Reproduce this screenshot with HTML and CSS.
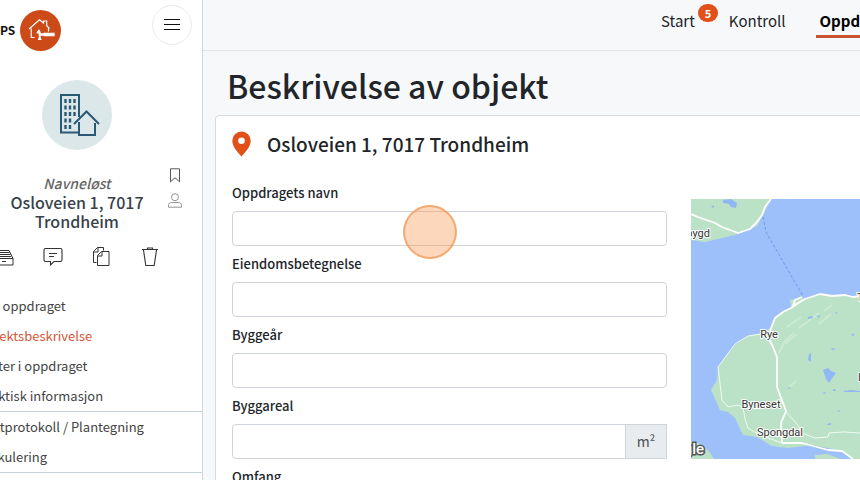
FILE: index.html
```html
<!DOCTYPE html>
<html lang="no">
<head>
    <meta charset="UTF-8">
    <meta name="viewport" content="width=device-width, initial-scale=1.0">
    <title>Beskrivelse av objekt</title>
    <link rel="stylesheet" href="styles.css">
</head>
<body>
    <aside class="sidebar">
        <div class="brand">
            <span class="brand-name">PS</span>
            <svg class="brand-logo" viewBox="0 0 41 41" aria-hidden="true">
                <circle cx="20.5" cy="20.5" r="20.5" fill="#cb4a18"/>
                <path d="M14.5 27.5h-3.300V18.500M9 19l10.500-9.300 4 3.300V11h3.200v4.800l2.800 2.700M28.500 18v3.500" fill="none" stroke="#fff" stroke-width="1.200"/>
                <path d="M18.500 19.500c1.300 0 2.200 2.200 2.200 3.800h3v-.5h11v3.500h-11v-.5h-3v2l1 2.300h-4l1-2.300v-4.300h-2.200c0-1.500 1-2.500 2-4z" fill="#fff"/>
            </svg>
            <button class="menu-button" aria-label="Meny">
                <svg width="16" height="12" viewBox="0 0 16 12"><path d="M0 .5h16M0 5.500h16M0 10.500h16" stroke="#111" stroke-width="1"/></svg>
            </button>
        </div>

        <div class="profile">
            <div class="avatar">
                <svg width="46" height="44" viewBox="-6 0 46 44" fill="none" stroke="#285b73" stroke-width="2">
                    <path d="M19 39.500H1V2h18v22"/>
                    <path d="M5.500 6v4M10 6v4M14.500 6v4M5.500 12.500v4M10 12.500v4M14.500 12.500v4M5.500 19v4M10 19v4M14.500 19v4M5.500 25.500v4M10 25.500v4M5.500 32v4M10 32v4" stroke-width="2.400"/>
                    <path d="M14 31l12.500-12.500L39 31M19 29v13h16V30"/>
                </svg>
            </div>
            <div class="project-name">Navneløst</div>
            <div class="project-address">Osloveien 1, 7017 Trondheim</div>
            <div class="side-actions">
                <button class="icon-button" aria-label="Bokmerke">
                    <svg width="14" height="15" viewBox="0 0 14 15"><path d="M2.500.8h9v13L7 9.700l-4.500 4.100z" fill="none" stroke="#444" stroke-width=".9"/></svg>
                </button>
                <button class="icon-button" aria-label="Bruker">
                    <svg width="14" height="15" viewBox="0 0 14 15" fill="none" stroke="#777" stroke-width=".8"><circle cx="7" cy="4.200" r="3.500"/><path d="M3.500 9.500h7c2 0 3 1.300 3 3v1.700H.5v-1.700c0-1.700 1-3 3-3z"/></svg>
                </button>
            </div>
        </div>

        <div class="toolbar">
            <button class="icon-button" aria-label="Arkiv">
                <svg width="20" height="20" viewBox="0 0 20 20" fill="none" stroke="#333"><path d="M1 11.500L4 3.500h11l4 8v6.500H1zM1 11.500h18M4 5.500h11.500M3.500 7.500h13M3 9.500h14M8 14.500h4"/></svg>
            </button>
            <button class="icon-button" aria-label="Kommentarer">
                <svg width="20" height="20" viewBox="0 0 20 20" fill="none" stroke="#333" stroke-width="1.100"><path d="M2.500 1.500h15q1.500 0 1.500 1.500v10q0 1.500-1.500 1.500H11L7.500 18v-3.500h-5Q1 14.500 1 13V3q0-1.500 1.500-1.500zM6 6.500h8M6 9.500h5"/></svg>
            </button>
            <button class="icon-button" aria-label="Kopier">
                <svg width="20" height="20" viewBox="0 0 20 20" fill="none" stroke="#333"><path d="M5.500 15.500h-3v-11l4-4h6v3M2.500 5H7V.5M6.500 8.500l4-4H18v14H6.500zM6.500 9H11V4.500"/></svg>
            </button>
            <button class="icon-button" aria-label="Slett">
                <svg width="20" height="20" viewBox="0 0 20 20" fill="none" stroke="#333" stroke-width="1.100"><path d="M2 2.500h16M7.500 2.500V1h5v1.500M3.500 3l2.300 15.500h8.400L16.500 3"/></svg>
            </button>
        </div>

        <nav class="side-nav">
            <a href="#">Om oppdraget</a>
            <a href="#" class="active">Objektsbeskrivelse</a>
            <a href="#">Parter i oppdraget</a>
            <a href="#">Praktisk informasjon</a>
        </nav>
        <nav class="side-nav">
            <a href="#">Fuktprotokoll / Plantegning</a>
            <a href="#">Kalkulering</a>
        </nav>
    </aside>

    <main class="main">
        <nav class="tabs">
            <a href="#">Start<span class="badge">5</span></a>
            <a href="#">Kontroll</a>
            <a href="#" class="current">Oppdrag</a>
        </nav>

        <h1>Beskrivelse av objekt</h1>

        <section class="card">
            <h2>
                <svg class="pin" width="19" height="26" viewBox="0 0 19 26"><path d="M9.500.5a9.200 9.200 0 0 1 9.200 9.300c0 6.200-5.700 11.700-9.200 15.700C6 21.500.3 16 .3 9.800A9.200 9.200 0 0 1 9.500.5zm0 6a3.300 3.300 0 1 0 0 6.600 3.300 3.300 0 0 0 0-6.600z" fill="#e2501a"/></svg>
                Osloveien 1, 7017 Trondheim
            </h2>
            <div class="card-body">
                <form class="fields">
                    <div class="field">
                        <label for="navn">Oppdragets navn</label>
                        <input type="text" id="navn">
                        <span class="click-marker"></span>
                    </div>
                    <div class="field">
                        <label for="eiendom">Eiendomsbetegnelse</label>
                        <input type="text" id="eiendom">
                    </div>
                    <div class="field">
                        <label for="byggear">Byggeår</label>
                        <input type="text" id="byggear">
                    </div>
                    <div class="field">
                        <label for="byggareal">Byggareal</label>
                        <div class="input-group">
                            <input type="text" id="byggareal">
                            <span class="unit">m²</span>
                        </div>
                    </div>
                    <div class="field">
                        <label for="omfang">Omfang</label>
                        <input type="text" id="omfang">
                    </div>
                </form>

                <svg class="map" viewBox="0 0 169 260" preserveAspectRatio="xMinYMin slice" role="img" aria-label="Kart">
                    <rect width="169" height="260" fill="#9dc0fa"/>
                    <!-- land -->
                    <g fill="#bbe2c6">
                        <path d="M0 0h80l-8 16-6 11-19 8-16 4-17 4-14-2z"/>
                        <path d="M99 101l12-3 3 3 15-6 12 2 13-1 8 2 7-1v163h-7l-8-6-13-4-20-4-24 3-16-2-15-9-14-2-8-17-7-6-8-2-9-20 6-10 1-13 17-22 13-9 13-3 9-5 5-10 16-11z"/>
                        <path d="M0 242q14 2 23 18H0zM124 256l12-2 19 6h-31z"/>
                    </g>
                    <path d="M123 246l18 6 13 4 4 4h-8l-14-5-14 1-4 4h-18l-8-9z" fill="#9dc0fa"/>
                    <g stroke="#cce9d2" stroke-width="2" fill="none">
                        <path d="M96 128l14-10M108 129l20-15M128 125l12-10M88 154l6-12 9-8M94 145l12-10M98 188l7-6M133 112l8-6"/>
                    </g>
                    <!-- lakes -->
                    <g fill="#8fb8f5">
                        <path d="M132 171l5-2 3 3 5 2-3 4-4 6-3-4zM118 155l2-1v9l-3-2zM117 118l4-1 1 2-5 1zM126 117l3-1-1 3zM144 114l2-1v2zM152 192l8-1 9 1v1h-15zM131 194l4-1-1 2zM142 190l3 1v1h-3zM136 225l4-1v2h-4zM146 212l2-1 1 2zM140 149l5 1-4 1zM160 136l3-2v3zM97 188l3 1-2 1zM32 1l8-1 6 4-1 5-5-1-2-3-6-1zM20 8l3-2v3z"/>
                    </g>
                    <path d="M72 18l3 15 19 33 18 31" fill="none" stroke="#6a99ee" stroke-width="1" stroke-dasharray="3 2"/>
                    <!-- roads -->
                    <g fill="none" stroke="#fff" stroke-linejoin="round">
                        <path d="M0 15l7 3 17 6 7 4 16 6 12-4 7-7 5-7 3-8 6-8M169 97l-7 1-8-2-13 1-12-2-15 5-12 7 2-6 7-3M112 101l-12 8-8 4-8 6-2 5-5 14 5 10 4 10v30l9 24-5 12 1 20 20 0 26 7 14 1 11 8" stroke-width="1.800"/>
                        <path d="M77 134l-20 3-13 8-17 23 4 33 6 7 9-2 6 2 2 12 3 9 12 7 22 8M95 213l11 12 5 9 13 5 13-1 1-4 14-1 17 1" stroke-width="1" stroke="#f0faf2"/>
                    </g>
                    <g class="map-label">
                        <text x="19" y="38" text-anchor="end">bygd</text>
                        <text x="78" y="139" text-anchor="middle">Rye</text>
                        <text x="70" y="209" text-anchor="middle">Byneset</text>
                        <text x="89" y="237" text-anchor="middle">Spongdal</text>
                        <text x="166" y="102">T</text>
                        <text x="167" y="182">L</text>
                    </g>
                    <text class="map-logo" x="13" y="255" text-anchor="end">Google</text>
                </svg>
            </div>
        </section>
    </main>
</body>
</html>
```
FILE: styles.css
```css
* {
    box-sizing: border-box;
}

body {
    margin: 0;
    height: 100vh;
    display: flex;
    overflow: hidden;
    background: #f7f8fa;
    color: #212529;
    font-family: "Noto Sans CJK SC", "Open Sans", sans-serif;
    font-size: 14px;
    line-height: 20px;
}

a {
    color: inherit;
    text-decoration: none;
}

button {
    padding: 0;
    border: none;
    background: none;
    cursor: pointer;
}

svg {
    display: block;
}

/* Sidebar, partly scrolled out to the left */
.sidebar {
    flex: none;
    width: 251px;
    margin-left: -48px;
    background: #fff;
    border-right: 1px solid #cfd8dc;
}

.brand {
    display: flex;
    align-items: center;
    height: 60px;
    padding: 0 10px 0 48px;
}

.brand-name {
    width: 20px;
    color: #111;
    font-size: 12px;
    font-weight: 700;
}

.brand-logo {
    width: 41px;
    height: 41px;
}

.menu-button {
    display: flex;
    align-items: center;
    justify-content: center;
    align-self: flex-start;
    width: 40px;
    height: 40px;
    margin: 5px 0 0 auto;
    border: 1px solid #e8eaec;
    border-radius: 50%;
}

.profile {
    position: relative;
    display: flex;
    flex-direction: column;
    align-items: center;
    padding: 20px 48px 0;
    text-align: center;
}

.avatar {
    display: flex;
    align-items: center;
    justify-content: center;
    width: 70px;
    height: 70px;
    border-radius: 50%;
    background: #dce7ea;
}

.project-name {
    margin-top: 23px;
    color: #666;
    font-size: 14px;
    font-style: italic;
    font-weight: 500;
}

.project-address {
    color: #37424a;
    font-size: 16px;
    font-weight: 500;
    line-height: 19px;
}

.side-actions {
    position: absolute;
    right: 20px;
    bottom: 23px;
    display: flex;
    flex-direction: column;
    gap: 10px;
}

.toolbar {
    display: flex;
    justify-content: space-between;
    padding: 16px 42px 0;
}

.side-nav {
    padding: 0 26px;
    border-bottom: 1px solid #c5d3d8;
    color: #444;
    font-size: 13px;
    line-height: 30px;
}

.toolbar + .side-nav {
    margin-top: 24px;
}

.side-nav a {
    display: block;
    white-space: nowrap;
}

.side-nav .active {
    color: #d4573a;
}

.main {
    flex: 1;
    min-width: 0;
}

.tabs {
    display: flex;
    justify-content: flex-end;
    gap: 26px;
    height: 51px;
    margin-right: -28px;
    border-bottom: 1px solid #dfe3e6;
    font-size: 15px;
    line-height: 20px;
}

.tabs a {
    position: relative;
    height: 38px;
    padding: 11px 4px 0;
}

.tabs .current {
    color: #000;
    font-weight: 700;
    border-bottom: 3px solid #c8532d;
}

.badge {
    position: absolute;
    top: 4px;
    left: 41px;
    width: 20px;
    border-radius: 9px;
    background: #e2501a;
    color: #fff;
    font-size: 11px;
    font-weight: 700;
    line-height: 18px;
    text-align: center;
}

h1 {
    margin: 0;
    padding: 14px 24px 10px;
    font-size: 32px;
    font-weight: 500;
    line-height: 40px;
}

.card {
    margin: 0 -8px 0 12px;
    padding: 15px 7px 16px 16px;
    background: #fff;
    border: 1px solid #d5dadd;
    border-radius: 4px;
}

h2 {
    display: flex;
    align-items: center;
    gap: 16px;
    margin: 0;
    font-size: 19px;
    font-weight: 500;
    line-height: 26px;
}

.card-body {
    display: grid;
    grid-template-columns: 1fr 169px;
    gap: 24px;
    padding-top: 26px;
}

.field {
    position: relative;
    margin-bottom: 8px;
}

label {
    display: block;
    margin-bottom: 8px;
    font-size: 13px;
    font-weight: 500;
}

input {
    display: block;
    width: 100%;
    height: 35px;
    padding: 0 12px;
    background: #fff;
    border: 1px solid #ced4da;
    border-radius: 4px;
    font: inherit;
}

.input-group {
    display: flex;
}

.input-group input {
    flex: 1;
    min-width: 0;
    border-radius: 4px 0 0 4px;
}

.unit {
    width: 42px;
    margin-left: -1px;
    border: 1px solid #ced4da;
    background: #e9ecef;
    color: #495057;
    line-height: 33px;
    text-align: center;
}

/* Marks where to click */
.click-marker {
    position: absolute;
    top: 22px;
    left: 171px;
    width: 54px;
    height: 54px;
    border: 2px solid rgba(240, 145, 70, 0.65);
    border-radius: 50%;
    background: rgba(250, 155, 85, 0.4);
}

.map {
    width: 100%;
    height: 260px;
    margin-top: 16px;
}

.map-label {
    fill: #333;
    stroke: #fff;
    stroke-width: 2px;
    paint-order: stroke;
    font-family: Roboto, sans-serif;
    font-size: 11px;
}

.map-logo {
    fill: #fff;
    stroke: #555;
    stroke-width: 3px;
    paint-order: stroke;
    font-family: Roboto, sans-serif;
    font-size: 15px;
    font-weight: 500;
}
```
